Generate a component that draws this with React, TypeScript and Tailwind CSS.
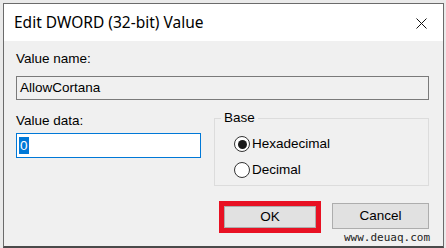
import React from "react";

const ui = { fontFamily: '"Liberation Sans", Arial, sans-serif' };
const title = { fontFamily: '"Segoe UI", "Noto Sans", "Open Sans", sans-serif' };

function Radio({ checked, label }: { checked?: boolean; label: string }) {
  return (
    <div className="flex items-center h-[26px]">
      <span className="w-[16px] h-[16px] rounded-full border border-[#333] bg-white flex items-center justify-center mr-[2px]">
        {checked && <span className="w-[9px] h-[9px] rounded-full bg-[#1a1a1a]" />}
      </span>
      <span className="text-[13.5px] text-black leading-none">{label}</span>
    </div>
  );
}

export default function App() {
  return (
    <div className="w-[446px] h-[248px] bg-[#eaeaea] pt-[3px] pl-[3px] overflow-hidden" style={ui}>
      <div className="w-[441px] h-[245px] flex flex-col border border-[#6b6b6b] border-b-2 border-b-[#4a4a4a] bg-[#f0f0f0]">
        {/* Title bar */}
        <div className="h-[37px] bg-white flex items-center justify-between pl-[10px] pr-[16px]">
          <span className="text-[15.5px] text-black" style={title}>
            Edit DWORD (32-bit) Value
          </span>
          <svg width="11" height="11" viewBox="0 0 11 11" className="mt-[1px]">
            <path d="M0.5 0.5 L10.5 10.5 M10.5 0.5 L0.5 10.5" stroke="#111" strokeWidth="1" />
          </svg>
        </div>

        {/* Body */}
        <div className="flex-1 flex flex-col pl-[12px] pr-[14px] pt-[10px] text-[13.5px] text-black">
          <div className="leading-[16px]">Value name:</div>
          <div className="mt-[9px] h-[24px] border border-[#7a7a7a] bg-[#f0f0f0] flex items-center pl-[3px]">
            AllowCortana
          </div>

          <div className="flex mt-[13px]">
            <div className="w-[185px] flex flex-col">
              <div className="leading-[16px]">Value data:</div>
              <div className="mt-[4px] h-[25px] border border-[#0078d7] bg-white flex items-center pl-[2px]">
                <span className="bg-[#0078d7] text-white px-[1px] leading-[17px]">0</span>
              </div>
            </div>
            <div className="ml-[13px] flex-1 relative mt-[5px] border border-[#dcdcdc] h-[68px] pl-[19px] pt-[12px]">
              <span className="absolute -top-[9px] left-[6px] bg-[#f0f0f0] px-[3px] leading-[16px]">Base</span>
              <Radio checked label="Hexadecimal" />
              <Radio label="Decimal" />
            </div>
          </div>

          <div className="flex justify-end items-start mt-[17px]">
            <div className="border-[5px] border-[#e81123] mr-[11px] -mt-[2px]">
              <div className="w-[92px] h-[22px] bg-[#e1e1e1] border border-[#adadad] flex items-center justify-center">
                OK
              </div>
            </div>
            <div className="flex flex-col items-end">
              <div className="w-[97px] h-[26px] bg-[#e1e1e1] border border-[#adadad] flex items-center justify-center">
                Cancel
              </div>
              <span
                className="text-[11px] leading-[12px] mt-[3px] mr-[-1px] text-[#222]"
                style={{ fontFamily: '"DejaVu Sans Mono", monospace' }}
              >
                www.deuaq.com
              </span>
            </div>
          </div>
        </div>
      </div>
    </div>
  );
}
